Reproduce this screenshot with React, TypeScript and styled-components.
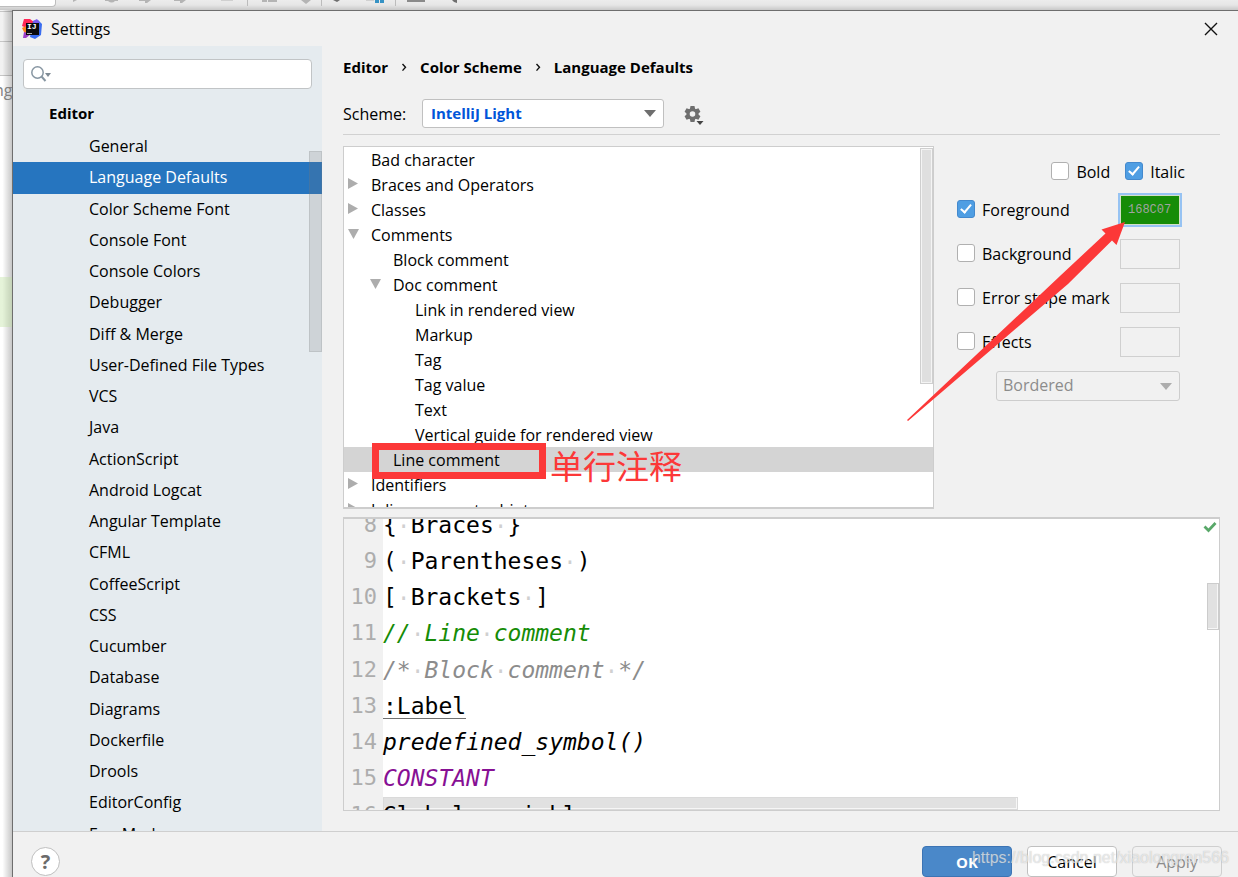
import React from "react";
import styled, { createGlobalStyle, css } from "styled-components";

const UI_FONT = `"Open Sans", "Noto Sans", "Noto Sans CJK SC", sans-serif`;
const CODE_FONT = `"DejaVu Sans Mono", "Liberation Mono", monospace`;

const GlobalStyle = createGlobalStyle`
  *, *::before, *::after { box-sizing: border-box; }
  body {
    margin: 0;
    font-family: ${UI_FONT};
    font-size: 16px;
    color: #000;
    background: #fff;
  }
  button, input, select { font: inherit; color: inherit; margin: 0; }
  ul { list-style: none; margin: 0; padding: 0; }
`;

/* ---------- Main window behind the dialog ---------- */

const Desktop = styled.div`
  display: flex;
  flex-direction: column;
  height: 100vh;
  min-height: 600px;
  overflow: hidden;
`;

const Toolbar = styled.div`
  display: flex;
  flex: none;
  height: 10px;
  background: linear-gradient(#ececec, #e6e6e6 50%, #c8c8c8);
`;

const ToolbarField = styled.div`
  width: 56px;
  height: 7px;
  border: 1px solid #bdbdbd;
  border-width: 0 1px 1px 0;
  border-radius: 0 0 4px 0;
  background: #fff;
`;

const Workspace = styled.div`
  display: flex;
  flex: 1;
  min-height: 0;
`;

const EditorEdge = styled.div`
  flex: none;
  width: 12px;
  overflow: hidden;
  background: linear-gradient(90deg, transparent 20%, rgba(0, 0, 0, 0.22)), #fff;
`;

const EdgeBar = styled.div<{ $height: number }>`
  height: ${(p) => p.$height}px;
  border-bottom: 1px solid rgba(0, 0, 0, 0.18);
  background: rgba(0, 0, 0, 0.05);
`;

const EdgeText = styled.div`
  height: 201px;
  padding-top: 4px;
  margin-left: -6px;
  line-height: 20px;
  color: #808080;
`;

const EdgeHighlight = styled.div`
  height: 50px;
  background: rgba(190, 225, 160, 0.4);
`;

/* ---------- Dialog frame ---------- */

const Dialog = styled.section`
  display: flex;
  flex: 1;
  flex-direction: column;
  min-width: 0;
  border: 1px solid #6e6e6e;
  border-width: 1px 0 0 1px;
  background: #f1f1f1;
`;

const TitleBar = styled.header`
  display: flex;
  flex: none;
  align-items: center;
  height: 35px;
  padding: 0 20px 0 9px;
`;

const Title = styled.h1`
  flex: 1;
  margin: 0 0 0 9px;
  font-size: 16px;
  font-weight: 400;
  line-height: 20px;
`;

const IconButton = styled.button`
  display: flex;
  padding: 0;
  border: 0;
  background: none;
`;

const Body = styled.div`
  display: flex;
  flex: 1;
  min-height: 0;
`;

/* ---------- Sidebar ---------- */

const Sidebar = styled.nav`
  position: relative;
  flex: none;
  width: 309px;
  overflow: hidden;
  background: #e5ebef;
`;

const SearchBox = styled.label`
  display: flex;
  align-items: center;
  height: 30px;
  margin: 13px 10px 10px;
  padding-left: 7px;
  border: 1px solid #c1c4c6;
  border-radius: 4px;
  background: #fff;
`;

const SearchInput = styled.input`
  flex: 1;
  min-width: 0;
  border: 0;
  outline: 0;
  background: none;
`;

const NavHeading = styled.h2`
  margin: 0;
  padding-left: 36px;
  font-size: 15px;
  font-weight: 700;
  line-height: 28px;
  height: 32px;
`;

const NavItem = styled.li<{ $selected?: boolean }>`
  height: 31px;
  padding-left: 76px;
  line-height: 30px;
  white-space: nowrap;
  &:nth-child(4n + 2) {
    height: 32px;
  }
  ${(p) =>
    p.$selected &&
    css`
      background: #2675bf;
      color: #fff;
    `}
`;

const NavLink = styled.a`
  color: inherit;
  text-decoration: none;
`;

const SidebarThumb = styled.div`
  position: absolute;
  top: 105px;
  right: 0;
  width: 13px;
  height: 201px;
  border: 1px solid rgba(120, 120, 120, 0.18);
  background: rgba(115, 115, 120, 0.2);
`;

/* ---------- Content ---------- */

const Content = styled.main`
  display: flex;
  flex: 1;
  flex-direction: column;
  min-width: 0;
  padding: 10px 18px 20px 21px;
`;

const Breadcrumbs = styled.div`
  display: flex;
  align-items: center;
  gap: 13px;
  height: 22px;
  font-size: 15px;
  font-weight: 700;
`;

const SchemeRow = styled.div`
  display: flex;
  align-items: center;
  height: 57px;
  padding-top: 21px;
  padding-bottom: 6px;
  border-bottom: 1px solid #d1d1d1;
`;

const SchemeLabel = styled.label`
  width: 79px;
`;

const SelectBox = styled.div<{ $width: number }>`
  display: grid;
  align-items: center;
  width: ${(p) => p.$width}px;
  > * {
    grid-area: 1 / 1;
  }
  > svg {
    justify-self: end;
    margin-right: 8px;
    pointer-events: none;
  }
`;

const Select = styled.select<{ $strong?: boolean }>`
  appearance: none;
  width: 100%;
  height: ${(p) => (p.$strong ? 29 : 30)}px;
  padding: 0 24px 2px ${(p) => (p.$strong ? 8 : 6)}px;
  border: 1px solid ${(p) => (p.$strong ? "#c0c0c0" : "#cdcdcd")};
  border-radius: 3px;
  background: ${(p) => (p.$strong ? "#fff" : "#f1f1f1")};
  color: ${(p) => (p.$strong ? "#0055d9" : "#8c8c8c")};
  font-size: ${(p) => (p.$strong ? 15 : 16)}px;
  font-weight: ${(p) => (p.$strong ? 700 : 400)};
  opacity: 1;
`;

const GearButton = styled(IconButton)`
  margin: 4px 0 0 20px;
`;

const Upper = styled.div`
  display: flex;
  flex: none;
  height: 363px;
  margin: 11px 0 8px;
`;

const Tree = styled.ul`
  position: relative;
  flex: 1;
  min-width: 0;
  overflow: hidden;
  border: 1px solid #cdcdcd;
  border-bottom-width: 2px;
  background: #fff;
`;

const TreeRow = styled.li<{ $level: number; $selected?: boolean }>`
  position: relative;
  display: flex;
  align-items: center;
  height: 25px;
  padding-left: ${(p) => 4 + p.$level * 22}px;
  padding-top: 1px;
  background: ${(p) => (p.$selected ? "#d4d4d4" : "transparent")};
  white-space: nowrap;
`;

const Twisty = styled.span`
  display: flex;
  width: 23px;
  padding-bottom: 2px;
`;

const TreeThumb = styled.div`
  position: absolute;
  top: 1px;
  right: 0;
  width: 13px;
  height: 236px;
  border: 1px solid #cfcfcf;
  box-shadow: inset 0 0 0 1px #f4f4f4;
  background: #dfdfdf;
`;

const Mark = styled.div`
  position: absolute;
  z-index: 2;
  top: -4px;
  left: 28px;
  display: flex;
  align-items: center;
  gap: 4px;
  color: #fc3838;
`;

const MarkFrame = styled.div`
  width: 174px;
  height: 36px;
  border: 7px solid #fc3838;
`;

const MarkText = styled.span`
  height: 48px;
  margin: -2px 0 -10px;
  font-family: "Noto Sans CJK SC", sans-serif;
  font-size: 33px;
  line-height: 48px;
`;

/* ---------- Attribute options ---------- */

const Options = styled.div`
  position: relative;
  flex: none;
  width: 286px;
  padding: 7px 40px 0 23px;
`;

const StyleRow = styled.div`
  display: flex;
  justify-content: flex-end;
  gap: 15px;
  height: 38px;
  margin-right: -5px;
`;

const OptionRow = styled.div`
  display: flex;
  align-items: center;
  justify-content: space-between;
  height: 44px;
  &:nth-child(2) {
    height: 38px;
    margin-bottom: 3px;
  }
`;

const CheckLabel = styled.label`
  display: flex;
  align-items: center;
  gap: 7px;
  line-height: 22px;
`;

const Checkbox = styled.input`
  appearance: none;
  position: relative;
  width: 18px;
  height: 18px;
  margin-bottom: 2px;
  border: 1px solid #b0b0b0;
  border-radius: 3px;
  background: #fff;
  &:checked {
    border-color: #4489cd;
    background: #4f9ee3;
  }
  &:checked::after {
    content: "";
    position: absolute;
    top: 1px;
    left: 5px;
    width: 6px;
    height: 11px;
    border: solid #fff;
    border-width: 0 2px 2px 0;
    transform: rotate(40deg);
  }
`;

const ColorField = styled.input`
  width: 60px;
  height: 30px;
  margin-bottom: 1px;
  border: 1px solid #d0d0d0;
  background: #f1f1f1;
`;

const ActiveColor = styled(ColorField)`
  padding: 0 0 0 7px;
  border-color: #d4e0c8;
  outline: 2px solid #97c3f3;
  background: #168c07;
  color: #a0a4a0;
  font-family: "Liberation Mono", monospace;
  font-size: 12px;
`;

const EffectRow = styled.div`
  display: flex;
  justify-content: flex-end;
  margin-top: 7px;
`;

const Arrow = styled.svg`
  position: absolute;
  z-index: 3;
  top: 74px;
  left: -28px;
  pointer-events: none;
`;

/* ---------- Code preview ---------- */

const Preview = styled.div`
  position: relative;
  flex: 1;
  min-height: 0;
  overflow: hidden;
  border: 1px solid #cdcdcd;
  border-top-width: 2px;
  background: linear-gradient(90deg, #f1f1f1 39px, #fff 39px);
  font-family: ${CODE_FONT};
  font-size: 23px;
`;

const CodeLines = styled.div`
  position: relative;
  z-index: 1;
  margin-top: -12px;
`;

const CodeLine = styled.div`
  display: flex;
  height: 36px;
  line-height: 36px;
  white-space: pre;
  &:nth-child(4n) {
    height: 37px;
  }
`;

const LineNumber = styled.span`
  flex: none;
  width: 39px;
  padding-right: 6px;
  color: #adadad;
  font-size: 22px;
  text-align: right;
`;

const Code = styled.code<{ $color?: string; $italic?: boolean; $underline?: boolean }>`
  font-family: inherit;
  height: ${(p) => (p.$underline ? 31 : 36)}px;
  color: ${(p) => p.$color ?? "#000"};
  font-style: ${(p) => (p.$italic ? "italic" : "normal")};
  border-bottom: ${(p) => (p.$underline ? "1px solid #707070" : "0")};
`;

const Space = styled.span`
  color: #d0d0d0;
  font-style: normal;
  font-family: "Liberation Mono", monospace;
`;

const PreviewThumb = styled.div<{ $horizontal?: boolean }>`
  position: absolute;
  border: 1px solid rgba(190, 190, 190, 0.6);
  background: rgba(200, 200, 200, 0.55);
  box-shadow: inset -1px -1px 0 #f6f6f6;
  ${(p) =>
    p.$horizontal
      ? css`
          left: 39px;
          bottom: 0;
          width: 635px;
          height: 13px;
          border-color: #dadada;
        `
      : css`
          top: 64px;
          right: 0;
          width: 12px;
          height: 47px;
        `}
`;

const Status = styled.svg`
  position: absolute;
  top: 2px;
  right: 2px;
`;

/* ---------- Footer ---------- */

const Footer = styled.footer`
  position: relative;
  display: flex;
  flex: none;
  gap: 15px;
  height: 46px;
  padding: 14px 16px 0 18px;
  border-top: 1px solid #cfcfcf;
`;

const HelpButton = styled.button`
  width: 29px;
  height: 29px;
  margin: 1px auto 0 0;
  padding: 0;
  border: 1px solid #bfbfbf;
  border-radius: 50%;
  background: #fff;
  color: #6b6b6b;
  font-size: 20px;
  font-weight: 700;
  line-height: 26px;
`;

const Button = styled.button<{ $kind?: "primary" | "plain" | "disabled" }>`
  width: 90px;
  height: 31px;
  padding: 1px 0 0;
  border: 1px solid ${(p) => (p.$kind === "primary" ? "#3c74b4" : p.$kind === "disabled" ? "#cfcfcf" : "#c0c0c0")};
  border-radius: 4px;
  background: ${(p) => (p.$kind === "primary" ? "#4a88c9" : p.$kind === "disabled" ? "#f1f1f1" : "#fff")};
  color: ${(p) => (p.$kind === "primary" ? "#fff" : p.$kind === "disabled" ? "#8c8c8c" : "#000")};
  font-size: ${(p) => (p.$kind === "primary" ? 15 : 16)}px;
  font-weight: ${(p) => (p.$kind === "primary" ? 700 : 400)};
`;

const Watermark = styled.span`
  position: absolute;
  top: 16px;
  right: 9px;
  color: rgba(255, 255, 255, 0.6);
  font-family: "Liberation Sans", sans-serif;
  font-size: 16px;
  line-height: 20px;
  text-shadow: 0 0 1px rgba(130, 130, 130, 0.55);
  pointer-events: none;
`;

/* ---------- Icons ---------- */

const ToolbarIcons = () => (
  <svg width="420" height="10" viewBox="56 0 420 10" aria-hidden="true">
    <g fill="#b4b4b4">
      <path d="M73 0h4l-4 2z" />
      <path d="M105 0h13v1h-3q-3 3-7 0h-3z" />
      <path d="M139 0h12l-4 3h-2V1h-6z" />
      <path d="M174 0h12l-4 3h-2V1h-6z" />
      <path d="M262 0h5v2h-5zM268 0h9v2h-9z" />
      <path d="M301 0h10l-5 4z" />
    </g>
    <path fill="#d0d0d0" d="M221 0h12v1h-12zM366 0h8v1h-8z" />
    <path stroke="#bcbcbc" d="M247.500 0v6M321.500 0v6M395.500 0v6" />
    <path fill="#3592c4" d="M375 0h4v3h-4zM380 0h4v3h-4z" />
    <path fill="#6e6e6e" d="M333 0h7l-3 2zM452 0h5v3l-3-1z" />
    <path fill="#8a8a8a" d="M407 0h18v2h-18z" />
  </svg>
);

const AppIcon = () => (
  <svg width="20" height="20" viewBox="0 0 20 20" aria-hidden="true">
    <path fill="#fe2857" d="M2 0h6l4 3-3 8-9-4z" />
    <path fill="#fc801d" d="M0 9l4-2 2 4-3 4z" />
    <path fill="#9b3fc8" d="M2 13l7 2-5 4-3 0z" />
    <path fill="#3a6df0" d="M11 2l5-1 4 4-1 11-6 4-5-2z" />
    <path fill="#7a5af0" d="M11 2l4-2 3 4-6 1z" />
    <path fill="#0a0a0c" d="M4 4h13v12H4z" />
    <text x="5" y="10" fill="#fff" fontFamily="Liberation Mono" fontWeight="700" fontSize="8">IJ</text>
    <path fill="#aaa" d="M5 14h5v1H5z" />
  </svg>
);

const CloseIcon = () => (
  <svg width="14" height="14" viewBox="0 0 14 14" aria-hidden="true">
    <path d="M1 1l12 12M13 1L1 13" stroke="#111" strokeWidth="1.400" />
  </svg>
);

const SearchIcon = () => (
  <svg width="20" height="18" viewBox="0 0 20 18" aria-hidden="true">
    <circle cx="6.500" cy="7.500" r="5.700" fill="none" stroke="#8796a2" strokeWidth="1.500" />
    <path d="M10.500 11.500l4 4.500" stroke="#8796a2" strokeWidth="2" />
    <path d="M14 8h6l-3 4z" fill="#7f8b95" />
  </svg>
);

const DropArrow = ({ color }: { color: string }) => (
  <svg width="12" height="7" viewBox="0 0 12 7" aria-hidden="true">
    <path d="M0 0h12L6 7z" fill={color} />
  </svg>
);

const GearIcon = () => (
  <svg width="20" height="21" viewBox="0 0 20 21" aria-hidden="true">
    <circle cx="8.500" cy="9" r="4.400" fill="none" stroke="#6e6e6e" strokeWidth="3.200" />
    {[0, 60, 120].map((a) => (
      <path
        key={a}
        d="M6.500 1h4l.6 3h-5.200zM6.500 17h4l.6-3h-5.200z"
        fill="#6e6e6e"
        transform={`rotate(${a} 8.500 9)`}
      />
    ))}
    <path d="M11 15h8.500l-4.200 5.500z" fill="#f1f1f1" />
    <path d="M12.500 16h7L16 20z" fill="#444" />
  </svg>
);

const Chevron = () => (
  <svg width="6" height="9" viewBox="0 0 6 9" aria-hidden="true">
    <path d="M1.500 1l3 3.300-3 3.300" fill="none" stroke="#111" strokeWidth="1.400" />
  </svg>
);

/* ---------- Data ---------- */

const NAV = [
  "General", "Language Defaults", "Color Scheme Font", "Console Font", "Console Colors",
  "Debugger", "Diff & Merge", "User-Defined File Types", "VCS", "Java", "ActionScript",
  "Android Logcat", "Angular Template", "CFML", "CoffeeScript", "CSS", "Cucumber",
  "Database", "Diagrams", "Dockerfile", "Drools", "EditorConfig", "FreeMarker",
];

type Node = { text: string; level: number; state?: "open" | "closed" };

const TREE: Node[] = [
  { text: "Bad character", level: 0 },
  { text: "Braces and Operators", level: 0, state: "closed" },
  { text: "Classes", level: 0, state: "closed" },
  { text: "Comments", level: 0, state: "open" },
  { text: "Block comment", level: 1 },
  { text: "Doc comment", level: 1, state: "open" },
  { text: "Link in rendered view", level: 2 },
  { text: "Markup", level: 2 },
  { text: "Tag", level: 2 },
  { text: "Tag value", level: 2 },
  { text: "Text", level: 2 },
  { text: "Vertical guide for rendered view", level: 2 },
  { text: "Line comment", level: 1 },
  { text: "Identifiers", level: 0, state: "closed" },
  { text: "Inline parameter hints", level: 0, state: "closed" },
];

const CODE: { text: string; color?: string; italic?: boolean; underline?: boolean }[] = [
  { text: "{ Braces }" },
  { text: "( Parentheses )" },
  { text: "[ Brackets ]" },
  { text: "// Line comment", color: "#168c07", italic: true },
  { text: "/* Block comment */", color: "#8c8c8c", italic: true },
  { text: ":Label", underline: true },
  { text: "predefined_symbol()", italic: true },
  { text: "CONSTANT", color: "#871094", italic: true },
  { text: "Global variable" },
];

const withSpaces = (text: string) =>
  text.split(" ").map((word, i) => (
    <React.Fragment key={i}>
      {i > 0 && <Space>·</Space>}
      {word}
    </React.Fragment>
  ));

export default function App() {
  return (
    <Desktop>
      <GlobalStyle />
      <Toolbar>
        <ToolbarField />
        <ToolbarIcons />
      </Toolbar>
      <Workspace>
        <EditorEdge>
          <EdgeBar $height={2} />
          <EdgeBar $height={30} />
          <EdgeBar $height={34} />
          <EdgeText>ng</EdgeText>
          <EdgeHighlight />
        </EditorEdge>
        <Dialog aria-label="Settings">
          <TitleBar>
            <AppIcon />
            <Title>Settings</Title>
            <IconButton type="button" aria-label="Close">
              <CloseIcon />
            </IconButton>
          </TitleBar>
          <Body>
            <Sidebar>
              <SearchBox>
                <SearchIcon />
                <SearchInput type="text" aria-label="Search settings" />
              </SearchBox>
              <NavHeading>Editor</NavHeading>
              <ul>
                {NAV.map((name) => (
                  <NavItem key={name} $selected={name === "Language Defaults"}>
                    <NavLink href="#">{name}</NavLink>
                  </NavItem>
                ))}
              </ul>
              <SidebarThumb />
            </Sidebar>
            <Content>
              <Breadcrumbs>
                <span>Editor</span>
                <Chevron />
                <span>Color Scheme</span>
                <Chevron />
                <span>Language Defaults</span>
              </Breadcrumbs>
              <SchemeRow>
                <SchemeLabel htmlFor="scheme">Scheme:</SchemeLabel>
                <SelectBox $width={242}>
                  <Select id="scheme" $strong>
                    <option>IntelliJ Light</option>
                  </Select>
                  <DropArrow color="#6e6e6e" />
                </SelectBox>
                <GearButton type="button" aria-label="Scheme actions">
                  <GearIcon />
                </GearButton>
              </SchemeRow>
              <Upper>
                <Tree>
                  {TREE.map((n) => (
                    <TreeRow key={n.text} $level={n.level} $selected={n.text === "Line comment"}>
                      <Twisty>
                        {n.state && (
                          <svg width="12" height="12" viewBox="0 0 12 12" aria-hidden="true">
                            <path d={n.state === "open" ? "M0 1h11L5.500 11z" : "M0 0v11l10-5.500z"} fill="#adadad" />
                          </svg>
                        )}
                      </Twisty>
                      {n.text}
                      {n.text === "Line comment" && (
                        <Mark>
                          <MarkFrame />
                          <MarkText>单行注释</MarkText>
                        </Mark>
                      )}
                    </TreeRow>
                  ))}
                  <TreeThumb />
                </Tree>
                <Options>
                  <StyleRow>
                    <CheckLabel>
                      <Checkbox type="checkbox" />
                      Bold
                    </CheckLabel>
                    <CheckLabel>
                      <Checkbox type="checkbox" defaultChecked />
                      Italic
                    </CheckLabel>
                  </StyleRow>
                  <OptionRow>
                    <CheckLabel>
                      <Checkbox type="checkbox" defaultChecked />
                      Foreground
                    </CheckLabel>
                    <ActiveColor type="text" aria-label="Foreground color" defaultValue="168C07" />
                  </OptionRow>
                  {["Background", "Error stripe mark", "Effects"].map((name) => (
                    <OptionRow key={name}>
                      <CheckLabel>
                        <Checkbox type="checkbox" />
                        {name}
                      </CheckLabel>
                      <ColorField type="text" aria-label={`${name} color`} disabled />
                    </OptionRow>
                  ))}
                  <EffectRow>
                    <SelectBox $width={184}>
                      <Select aria-label="Effect type" disabled>
                        <option>Bordered</option>
                      </Select>
                      <DropArrow color="#adadad" />
                    </SelectBox>
                  </EffectRow>
                  <Arrow width="222" height="204" viewBox="906 220 222 204" aria-hidden="true">
                    <path d="M1125 222L1101.500 229.500L1105.500 233.500L1060 276L907 420L908 421L1068 284L1112 240.500L1116.500 245Z" fill="#fc3838" />
                  </Arrow>
                </Options>
              </Upper>
              <Preview>
                <CodeLines>
                  {CODE.map((line, i) => (
                    <CodeLine key={line.text}>
                      <LineNumber>{i + 8}</LineNumber>
                      <Code $color={line.color} $italic={line.italic} $underline={line.underline}>
                        {withSpaces(line.text)}
                      </Code>
                    </CodeLine>
                  ))}
                </CodeLines>
                <Status width="14" height="12" viewBox="0 0 14 12" aria-hidden="true">
                  <path d="M1.500 5.500l4 4 7-7.500" fill="none" stroke="#59a869" strokeWidth="2.800" />
                </Status>
                <PreviewThumb />
                <PreviewThumb $horizontal />
              </Preview>
            </Content>
          </Body>
          <Footer>
            <HelpButton type="button" aria-label="Help">?</HelpButton>
            <Button type="button" $kind="primary">OK</Button>
            <Button type="button" $kind="plain">Cancel</Button>
            <Button type="button" $kind="disabled" disabled>Apply</Button>
            <Watermark>https://blog.csdn.net/xiaolongren566</Watermark>
          </Footer>
        </Dialog>
      </Workspace>
    </Desktop>
  );
}
